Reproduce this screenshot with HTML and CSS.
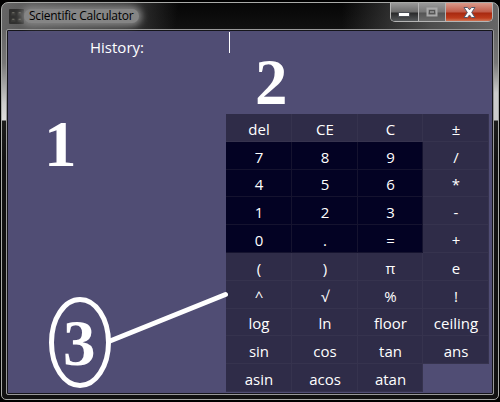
FILE: index.html
```html
<!DOCTYPE html>
<html lang="en">
<head>
<meta charset="utf-8">
<title>Scientific Calculator</title>
<link rel="stylesheet" href="styles.css">
</head>
<body>
<div class="window">
  <header class="titlebar">
    <svg class="app-icon" width="15" height="15" viewBox="0 0 14 14">
      <rect width="14" height="14" rx="1" fill="#30302f"/>
      <path d="M2 3h4v3H2zM8 3h4v3H8zM2 9h4v3H2zM8 9h4v3H8z" fill="#3d3d3b"/>
      <path d="M3 3h2v1H3zM9 3h2v1H9zM3 9h2v1H3zM9 9h2v1H9z" fill="#77766d"/>
    </svg>
    <h1 class="title">Scientific Calculator</h1>
    <div class="controls">
      <span class="control minimize"><svg width="13" height="6" viewBox="0 0 13 6"><rect x=".5" y=".5" width="11" height="4" fill="#fff" stroke="#4b4e55"/></svg></span>
      <span class="control maximize"><svg width="12" height="10" viewBox="0 0 12 10"><rect x="1.5" y="1.5" width="9" height="7" fill="none" stroke="#aaa" stroke-width="2"/><rect x="3.500" y="3.500" width="5" height="3" fill="#888" stroke="#555"/></svg></span>
      <span class="control close"><svg width="13" height="11" viewBox="0 0 13 11"><path d="M1 .5h3.500l2 2.300 2-2.300H12L8.700 5.500l3.300 5H8.500l-2-2.600-2 2.600H1l3.300-5z" fill="#fff" stroke="#555a6b"/></svg></span>
    </div>
  </header>
  <main class="client">
    <section class="history">History:</section>
    <section class="panel">
      <div class="display"><i class="caret"></i></div>
      <div class="keys">
        <span>del</span><span>CE</span><span>C</span><span>±</span>
        <span class="num">7</span><span class="num">8</span><span class="num">9</span><span>/</span>
        <span class="num">4</span><span class="num">5</span><span class="num">6</span><span>*</span>
        <span class="num">1</span><span class="num">2</span><span class="num">3</span><span>-</span>
        <span class="num">0</span><span class="num">.</span><span class="num">=</span><span>+</span>
        <span>(</span><span>)</span><span>π</span><span>e</span>
        <span>^</span><span>√</span><span>%</span><span>!</span>
        <span>log</span><span>ln</span><span>floor</span><span>ceiling</span>
        <span>sin</span><span>cos</span><span>tan</span><span>ans</span>
        <span>asin</span><span>acos</span><span>atan</span>
      </div>
    </section>
  </main>
</div>
<svg class="annotations" width="500" height="402" viewBox="0 0 500 402">
  <text x="44" y="166">1</text>
  <text x="255" y="104">2</text>
  <text x="63" y="365">3</text>
  <ellipse cx="80" cy="342.5" rx="28.5" ry="43"/>
  <path d="M110 341L225.500 294.500"/>
</svg>
</body>
</html>
```
FILE: styles.css
```css
* { box-sizing: border-box; }
body {
  margin: 0;
  width: 500px;
  height: 402px;
  padding: 2px 1px;
  overflow: hidden;
  background: #000;
  font-family: "Open Sans", "Noto Sans", sans-serif;
}
.window {
  height: 398px;
  padding: 0 4px;
  border: 1px solid #a9aaa8;
  border-radius: 7px 7px 5px 5px;
  background:
    linear-gradient(100deg, #666 0, #5a5a5a 25px, #3c3c3c 120px, transparent 175px) 0 0 / 100% 27px no-repeat,
    linear-gradient(90deg, transparent 340px, #4d4d4d 430px, #666) 0 0 / 100% 27px no-repeat,
    linear-gradient(#666 27px, #777 60px, #ccc 100px, #ddd 117px, #1c1c1c 118px, #111 160px, #111) 0 0 / 4px 100% no-repeat,
    linear-gradient(#666 27px, #777 60px, #ccc 90px, #ccc 117px, #1c1c1c 118px, #111 160px, #111) 100% 0 / 4px 100% no-repeat,
    linear-gradient(#060606, #111 27px);
}
.titlebar {
  display: flex;
  height: 26px;
  align-items: center;
  padding-left: 3px;
}
.title {
  margin: 0;
  padding: 0 5px;
  font-size: 12px;
  font-weight: 400;
  line-height: 14px;
  letter-spacing: -0.22px;
  color: #000;
  background: #858585;
  border-radius: 7px;
  box-shadow: 0 0 7px 3px #858585;
}
.controls {
  display: flex;
  align-self: flex-start;
  height: 19px;
  margin-left: auto;
  margin-right: 1px;
  border: 1px solid #b5b5b5;
  border-top: 0;
  border-radius: 0 0 5px 5px;
  overflow: hidden;
}
.control {
  display: flex;
  width: 27px;
  align-items: center;
  justify-content: center;
  border-right: 1px solid #b5b5b5;
  background: linear-gradient(#999 0, #6b6b6b 9px, #292a2b 10px, #55585a);
}
.minimize { width: 28px; padding-top: 5px; }
.maximize { background: linear-gradient(#999, #777 9px, #555 10px, #6b6b6b); }
.close {
  width: 46px;
  border: 0;
  background: linear-gradient(#d99a8b 0, #c05b48 9px, #a82910 10px, #bd3c1c 15px, #d07555);
}
.client {
  display: flex;
  height: 366px;
  padding: 1px;
  border: 1px solid #999;
  border-radius: 2px;
  box-shadow: inset 0 0 0 1px #15151b;
  background: #504d74;
  color: #fff;
  font-size: 15px;
}
.history {
  width: 218px;
  padding-top: 7px;
  text-align: center;
  line-height: 19px;
}
.panel { width: 266px; }
.display { height: 83px; padding: 1px 3px; }
.caret { display: block; width: 1px; height: 21px; background: #fff; }
.keys {
  display: grid;
  grid-template-columns: 66px 66px 65px 66px;
  grid-template-rows: repeat(10, 27.8px);
}
.keys span {
  display: flex;
  align-items: center;
  justify-content: center;
  padding-top: 2px;
  background: #2f2c48;
  box-shadow: inset -1px -1px #36334e;
}
.keys .num { background: #030223; box-shadow: inset -1px -1px #15132f; }
.annotations { position: absolute; top: 0; left: 0; }
.annotations text {
  fill: #fff;
  font: bold 65px "Liberation Serif", serif;
}
.annotations ellipse, .annotations path {
  fill: none;
  stroke: #fff;
  stroke-width: 5;
  stroke-linecap: round;
}
```
